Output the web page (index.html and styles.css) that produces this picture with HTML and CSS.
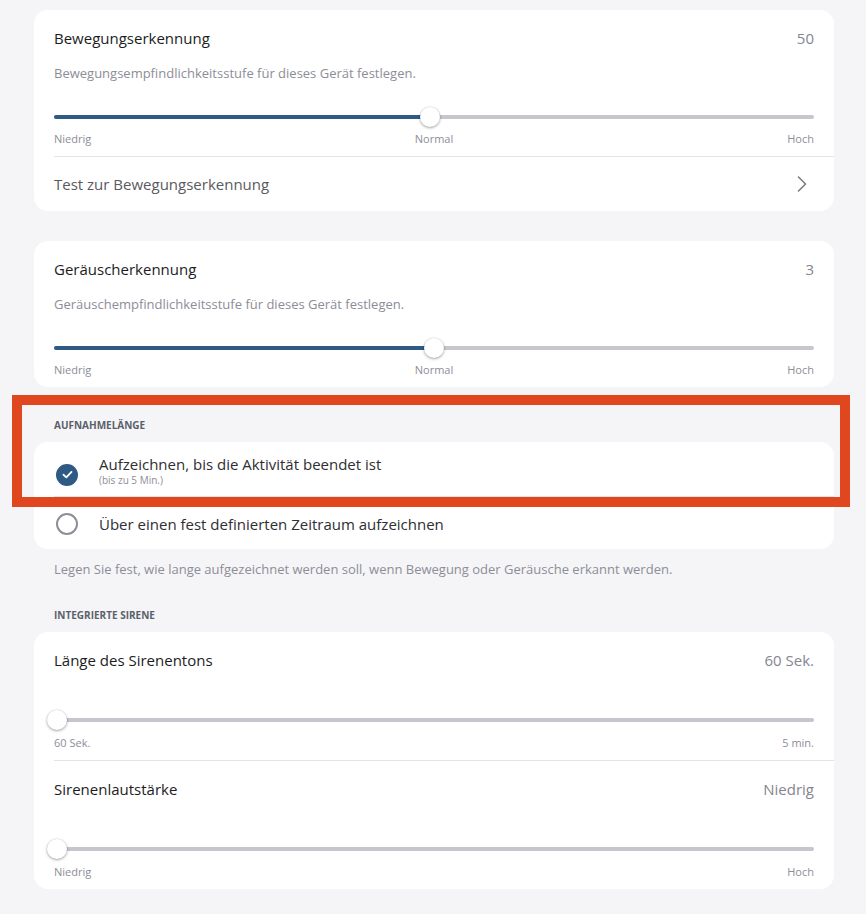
FILE: index.html
```html
<!DOCTYPE html>
<html lang="de">
<head>
<meta charset="utf-8">
<title>Einstellungen</title>
<link rel="stylesheet" href="styles.css">
</head>
<body>
<main class="page">

  <section class="card">
    <div class="block">
      <div class="head"><span class="title">Bewegungserkennung</span><span class="value">50</span></div>
      <p class="desc">Bewegungsempfindlichkeitsstufe für dieses Gerät festlegen.</p>
      <div class="slider">
        <div class="track"><div class="fill" style="width:49.5%"></div><div class="thumb" style="left:49.5%"></div></div>
      </div>
      <div class="scale three"><span>Niedrig</span><span class="mid">Normal</span><span class="end">Hoch</span></div>
    </div>
    <div class="link-row">
      <span class="link-text">Test zur Bewegungserkennung</span>
      <svg class="chevron" width="12" height="18" viewBox="0 0 12 18"><path d="M2.5 2 L9.5 9 L2.5 16" fill="none" stroke="#7d7d85" stroke-width="1.6" stroke-linecap="round" stroke-linejoin="round"/></svg>
    </div>
  </section>

  <section class="card gap-top">
    <div class="block last">
      <div class="head"><span class="title">Geräuscherkennung</span><span class="value">3</span></div>
      <p class="desc">Geräuschempfindlichkeitsstufe für dieses Gerät festlegen.</p>
      <div class="slider">
        <div class="track"><div class="fill" style="width:50%"></div><div class="thumb" style="left:50%"></div></div>
      </div>
      <div class="scale three"><span>Niedrig</span><span class="mid">Normal</span><span class="end">Hoch</span></div>
    </div>
  </section>

  <h2 class="section-label first-label">Aufnahmelänge</h2>
  <section class="card">
    <div class="option sep">
      <span class="radio checked">
        <svg width="13" height="13" viewBox="0 0 12 12"><path d="M2.3 6.2 L4.9 8.6 L9.7 3.6" fill="none" stroke="#fff" stroke-width="1.7" stroke-linecap="round" stroke-linejoin="round"/></svg>
      </span>
      <div class="option-text">
        <span class="option-main">Aufzeichnen, bis die Aktivität beendet ist</span>
        <span class="option-sub">(bis zu 5 Min.)</span>
      </div>
    </div>
    <div class="option plain">
      <span class="radio"></span>
      <div class="option-text">
        <span class="option-main">Über einen fest definierten Zeitraum aufzeichnen</span>
      </div>
    </div>
  </section>
  <p class="footnote">Legen Sie fest, wie lange aufgezeichnet werden soll, wenn Bewegung oder Geräusche erkannt werden.</p>

  <h2 class="section-label">Integrierte Sirene</h2>
  <section class="card">
    <div class="block siren">
      <div class="head"><span class="title">Länge des Sirenentons</span><span class="value">60 Sek.</span></div>
      <div class="slider spaced">
        <div class="track"><div class="thumb" style="left:0.4%"></div></div>
      </div>
      <div class="scale two"><span>60 Sek.</span><span class="end">5 min.</span></div>
    </div>
    <div class="block siren last">
      <div class="head"><span class="title">Sirenenlautstärke</span><span class="value">Niedrig</span></div>
      <div class="slider spaced">
        <div class="track"><div class="thumb" style="left:0.4%"></div></div>
      </div>
      <div class="scale two"><span>Niedrig</span><span class="end">Hoch</span></div>
    </div>
  </section>

  <div class="highlight" aria-hidden="true"></div>
</main>
</body>
</html>
```

FILE: styles.css
```css
* { box-sizing: border-box; }

html, body {
  margin: 0;
  padding: 0;
  background: #f5f5f7;
}

body {
  font-family: "Open Sans", "Liberation Sans", sans-serif;
  color: #1c1c1e;
  width: 866px;
  height: 914px;
  overflow: hidden;
}

.page {
  position: relative;
  padding: 10px 32px 0 34px;
  height: 914px;
}

.card {
  background: #ffffff;
  border-radius: 14px;
  width: 800px;
  overflow: hidden;
}

.gap-top { margin-top: 30px; }

.block {
  padding: 18px 20px 10px 20px;
}

.block + .block {
  border-top: 1px solid #e4e4e8;
  margin-left: 20px;
  padding-left: 0;
}

.head {
  display: flex;
  justify-content: space-between;
  align-items: center;
  height: 20px;
}

.title {
  font-size: 15px;
  line-height: 20px;
  color: #1c1c1e;
}

.value {
  font-size: 15px;
  line-height: 20px;
  color: #85858f;
}

.desc {
  margin: 16px 0 0 0;
  font-size: 13px;
  line-height: 18px;
  color: #8d8d98;
}

.slider {
  margin-top: 25px;
  height: 20px;
  display: flex;
  align-items: center;
}

.slider.spaced { margin-top: 40px; }

.track {
  position: relative;
  width: 100%;
  height: 4px;
  border-radius: 2px;
  background: #c6c6ce;
}

.fill {
  height: 100%;
  border-radius: 2px;
  background: #2f5a84;
}

.thumb {
  position: absolute;
  top: 50%;
  width: 20px;
  height: 20px;
  margin-left: -10px;
  margin-top: -10px;
  border-radius: 50%;
  background: #ffffff;
  box-shadow: 0 1px 3px rgba(0, 0, 0, 0.35), 0 0 0 0.5px rgba(0, 0, 0, 0.06);
}

.scale {
  margin-top: 5px;
  font-size: 11px;
  line-height: 14px;
  color: #8d8d98;
}

.scale.three {
  display: grid;
  grid-template-columns: 1fr auto 1fr;
}

.scale.two {
  display: flex;
  justify-content: space-between;
  margin-top: 6px;
}

.scale .mid { text-align: center; }
.scale .end { text-align: right; }

.link-row {
  margin-left: 20px;
  border-top: 1px solid #e4e4e8;
  height: 55px;
  padding-right: 26px;
  display: flex;
  align-items: center;
  justify-content: space-between;
}

.link-text {
  font-size: 15px;
  line-height: 20px;
  color: #5a5a60;
}

.chevron { display: block; }

.section-label {
  margin: 30px 0 10px 20px;
  font-size: 10px;
  line-height: 14px;
  font-weight: 700;
  text-transform: uppercase;
  color: #5b5f6b;
  letter-spacing: 0;
}

.first-label { margin-top: 31px; }

.option {
  display: flex;
  align-items: center;
  padding-left: 22px;
}

.option.sep {
  padding-top: 12px;
  padding-bottom: 10px;
  position: relative;
}

.option.sep::after {
  content: "";
  position: absolute;
  left: 20px;
  right: 0;
  bottom: 0;
  border-bottom: 1px solid #e4e4e8;
}

.option.plain {
  height: 52px;
  padding-top: 1px;
}

.radio {
  flex: none;
  width: 22px;
  height: 22px;
  border-radius: 50%;
  border: 2px solid #8e8e99;
  display: flex;
  align-items: center;
  justify-content: center;
  margin-right: 21px;
}

.radio.checked {
  background: #2f5a84;
  border-color: #2f5a84;
  margin-top: 8px;
}

.option-text {
  display: flex;
  flex-direction: column;
}

.option-main {
  font-size: 15px;
  line-height: 20px;
  color: #2e2e33;
}

.option-sub {
  font-size: 10px;
  line-height: 13px;
  color: #8d8d98;
}

.footnote {
  margin: 11px 0 0 20px;
  font-size: 13px;
  line-height: 18px;
  color: #8d8d98;
}

.highlight {
  position: absolute;
  left: 12px;
  top: 395px;
  width: 838px;
  height: 112px;
  border: 10px solid #e0471f;
  pointer-events: none;
}
```
